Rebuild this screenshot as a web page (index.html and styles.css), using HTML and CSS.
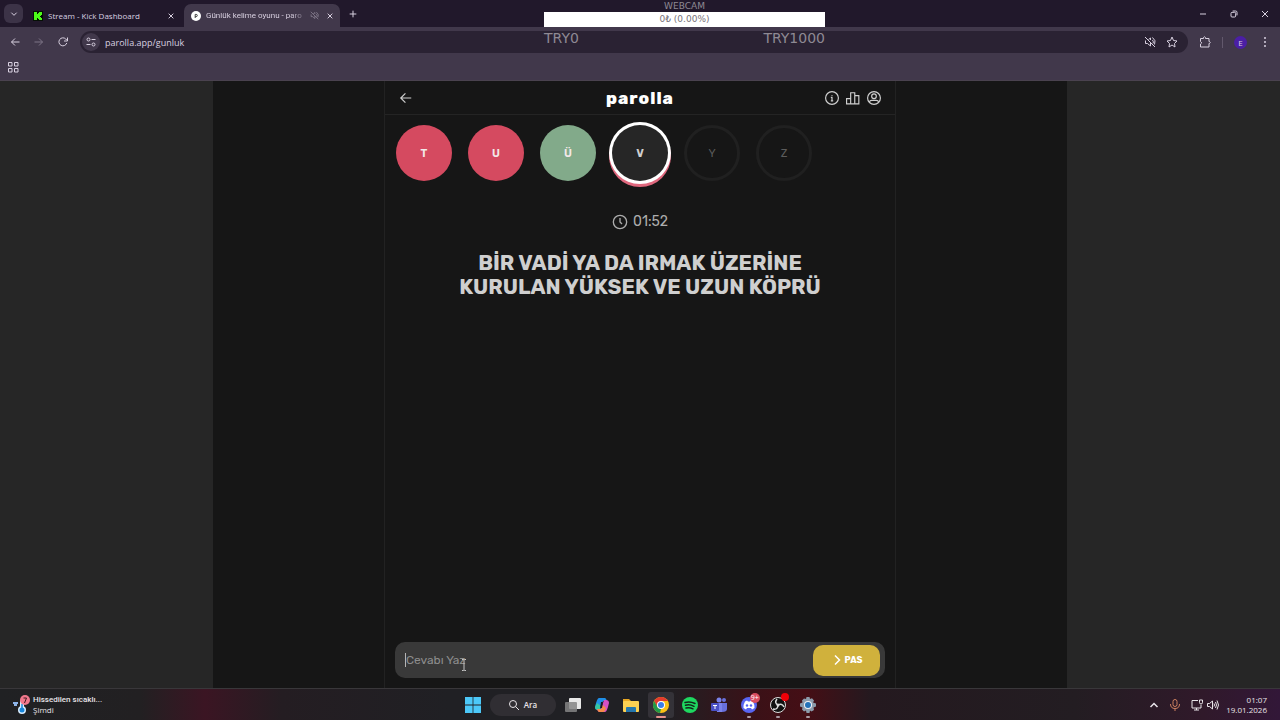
FILE: index.html
```html
<!DOCTYPE html>
<html lang="tr">
<head>
    <meta charset="UTF-8" />
    <title>Günlük kelime oyunu - parolla</title>
    <link rel="stylesheet" href="styles.css">
</head>
<body>
    <div class="tab-bar">
        <button class="tab-search" aria-label="Sekmelerde ara">
            <svg class="icon-small" viewBox="0 0 24 24"><path d="M4 8l8 8 8-8" /></svg>
        </button>
        <div class="tab">
            <svg class="favicon" viewBox="0 0 10 10"><rect width="10" height="10" fill="#061006" /><path fill="#4cfa18" d="M1 1h3v2h1V2h1V1h3v3H8v1H7v1h1v1h1v2H6V8H5V7H4v2H1z" /></svg>
            <span class="tab-title">Stream - Kick Dashboard</span>
            <button class="tab-close" aria-label="Kapat"><svg class="icon-small" viewBox="0 0 24 24"><path d="M5 5l14 14M19 5L5 19" /></svg></button>
        </div>
        <div class="tab tab-active">
            <svg class="favicon" viewBox="0 0 10 10"><circle cx="5" cy="5" r="5" fill="#fff" /><path d="M4.2 7V3.4h1a1.1 1.1 0 0 1 0 2.2h-1" fill="none" stroke="#444" stroke-width="1" /></svg>
            <span class="tab-title tab-title-fade">Günlük kelime oyunu - paro</span>
            <svg class="icon-mute" viewBox="0 0 24 24"><path d="M3 9v6h4l6 5v-7M9 7l4-3v4M2 2l20 20M17 8q3 4 1 7M17 3q8 6 4 14" /></svg>
            <button class="tab-close" aria-label="Kapat"><svg class="icon-small" viewBox="0 0 24 24"><path d="M5 5l14 14M19 5L5 19" /></svg></button>
        </div>
        <button class="new-tab" aria-label="Yeni sekme"><svg class="icon-small" viewBox="0 0 24 24"><path d="M12 2v20M2 12h20" /></svg></button>
        <div class="window-buttons">
            <button aria-label="Küçült"><svg class="icon-small" viewBox="0 0 24 24"><path d="M3 12h18" /></svg></button>
            <button aria-label="Geri yükle"><svg class="icon-small" viewBox="0 0 24 24"><rect x="3" y="7" width="14" height="14" rx="3" /><path d="M8 3h9q4 0 4 4v9" /></svg></button>
            <button aria-label="Pencereyi kapat"><svg class="icon-small" viewBox="0 0 24 24"><path d="M3 3l18 18M21 3L3 21" /></svg></button>
        </div>
    </div>

    <div class="toolbar">
        <button class="nav-button" aria-label="Geri"><svg class="icon" viewBox="0 0 24 24"><path d="M21 12H5M12 5l-7 7 7 7" /></svg></button>
        <button class="nav-button dim" aria-label="İleri"><svg class="icon" viewBox="0 0 24 24"><path d="M3 12h16M12 5l7 7-7 7" /></svg></button>
        <button class="nav-button" aria-label="Yenile"><svg class="icon" viewBox="0 0 24 24"><path d="M19.500 14a8 8 0 1 1-2-8l3 3M21 3v7h-7" /></svg></button>
        <div class="address-bar">
            <button class="site-info" aria-label="Site bilgileri"><svg class="icon" viewBox="0 0 24 24"><path d="M13 7h8M11 17H3" /><circle cx="7" cy="7" r="3" /><circle cx="17" cy="17" r="3" /></svg></button>
            <input class="url" type="text" value="parolla.app/gunluk" aria-label="Adres">
            <button class="address-button" aria-label="Ses kapalı"><svg class="icon" viewBox="0 0 24 24"><path d="M3 9v6h4l6 5v-7M9 7l4-3v4M2 2l20 20M17 8q3 4 1 7M17 3q8 6 4 14" /></svg></button>
            <button class="address-button" aria-label="Yer işareti"><svg class="icon" viewBox="0 0 24 24"><path d="M12 2l3 7 7 1-5 5 1 7-6-4-6 4 1-7-5-5 7-1z" /></svg></button>
        </div>
        <button class="tool-button" aria-label="Uzantılar"><svg class="icon" viewBox="0 0 24 24"><path d="M3 5h6V3q2-3 4 0v2h7v6h1q3 2 0 4h-1v7H3v-6q5-2 0-5z" /></svg></button>
        <span class="divider"></span>
        <button class="profile">E</button>
        <button class="menu-button" aria-label="Menü"><svg class="icon" viewBox="0 0 24 24"><path stroke-linecap="round" stroke-width="4" d="M12 4v0M12 12v0M12 20v0" /></svg></button>
    </div>

    <div class="bookmarks">
        <button class="nav-button" aria-label="Uygulamalar"><svg class="icon" viewBox="0 0 24 24"><path d="M3 3h7v7H3zM15 3h7v7h-7zM3 15h7v7H3zM15 15h7v7h-7z" /></svg></button>
    </div>

    <!-- bağış hedefi -->
    <div class="goal">
        <div class="goal-title">WEBCAM</div>
        <div class="goal-bar">0₺ (0.00%)</div>
        <div class="goal-range"><span>TRY0</span><span>TRY1000</span></div>
    </div>

    <div class="page">
        <main class="game">
            <header class="game-header">
                <a href="#" class="back" aria-label="Geri dön"><svg class="icon-game" viewBox="0 0 24 24"><path d="M21 12H4M11 4l-8 8 8 8" /></svg></a>
                <h1 class="logo">parolla</h1>
                <nav class="game-links">
                    <a href="#" aria-label="Bilgi"><svg class="icon-game" viewBox="0 0 24 24"><circle cx="12" cy="12" r="11" /><path d="M10 11h2v6M10 17h4M12 7v1" /></svg></a>
                    <a href="#" aria-label="İstatistik"><svg class="icon-game" viewBox="0 0 24 24"><path d="M1 13h7v9H1zM8 3h7v19H8zM15 8h7v14h-7z" /></svg></a>
                    <a href="#" aria-label="Profil"><svg class="icon-game" viewBox="0 0 24 24"><circle cx="12" cy="12" r="11" /><circle cx="12" cy="9" r="4" /><path d="M4 19q1-3 4-3h8q3 0 4 3" /></svg></a>
                </nav>
            </header>

            <div class="letters">
                <span class="letter wrong">T</span>
                <span class="letter wrong">U</span>
                <span class="letter correct">Ü</span>
                <span class="letter current">V</span>
                <span class="letter">Y</span>
                <span class="letter">Z</span>
            </div>

            <div class="timer">
                <svg class="icon-clock" viewBox="0 0 24 24"><circle cx="12" cy="12" r="10" /><path d="M12 6v6l3 3" /></svg>
                <span>01:52</span>
            </div>
            <h2 class="question">BİR VADİ YA DA IRMAK ÜZERİNE<br>KURULAN YÜKSEK VE UZUN KÖPRÜ</h2>

            <form class="answer">
                <span class="caret"></span>
                <input class="answer-input" type="text" placeholder="Cevabı Yaz" aria-label="Cevabı Yaz">
                <svg class="mouse" viewBox="0 0 6 12"><path d="M1 .5h1.500L3 1l.5-.5H5M3 1v10M1 11.500h1.500L3 11l.5.5H5" /></svg>
                <button class="pass" type="button"><svg class="icon" viewBox="0 0 24 24"><path d="M8 3l9 9-9 9" /></svg>PAS</button>
            </form>
        </main>
    </div>

    <footer class="taskbar">
        <div class="weather">
            <svg class="weather-icon" viewBox="0 0 20 20"><path d="M1 8h5M2 10h3" stroke="#8db4e8" stroke-width="2" /><path d="M10 6v9" stroke="#d9edff" stroke-width="4" stroke-linecap="round" /><circle cx="10" cy="15" r="4" fill="#d9edff" /><circle cx="10" cy="15" r="2.500" fill="#1686db" /><path d="M10 9v6" stroke="#1686db" stroke-width="1.500" /><circle cx="13" cy="5" r="5" fill="#f0788c" /><path d="M11.500 3h3l-2 5" fill="none" stroke="#401820" /></svg>
            <div class="weather-text"><span class="weather-title">Hissedilen sıcaklı...</span><span>Şimdi</span></div>
        </div>
        <div class="task-center">
            <button class="start" aria-label="Başlat"><svg viewBox="0 0 16 16"><path fill="#4cc8f8" d="M0 0h7.600v7.600H0zM8.400 0H16v7.600H8.400zM0 8.400h7.600V16H0zM8.400 8.400H16V16H8.400z" /></svg></button>
            <button class="search"><svg class="icon" viewBox="0 0 24 24"><circle cx="10" cy="10" r="7" /><path d="M15 15l7 7" /></svg>Ara</button>
            <div class="apps">
                <button class="app" aria-label="Görev görünümü"><svg viewBox="0 0 16 16"><rect x="4" y="1" width="12" height="11" rx="1" fill="#e8e8e8" /><rect x="0" y="5" width="12" height="10" rx="1" fill="#858585" opacity=".85" /></svg></button>
                <button class="app" aria-label="Copilot"><svg viewBox="0 0 16 16"><path fill="#1f8fe8" d="M5 1h6q1 0 2 3H9L6 13H4Q1 13 1 10 3 1 5 1z" /><path fill="#36c6a0" d="M3 6l-2 4q0 3 3 3h2l1-4z" /><path fill="#d650c4" d="M11 15H5q-1 0-2-3h4l3-9h2q3 0 3 3-2 9-4 9z" /><path fill="#f58a4a" d="M5 15q-1 0-2-3h4l2-4 3 3q-1 4-3 4z" /><path fill="#201b22" d="M7 5h2L8 11H6z" /></svg></button>
                <button class="app" aria-label="Dosya Gezgini"><svg viewBox="0 0 16 16"><path fill="#e8a723" d="M0 2h6l2 2h7v4H0z" /><rect y="4" width="16" height="11" rx="1" fill="#fbd052" /><path fill="#2577ad" d="M3 15v-4q0-1 1-1h8q1 0 1 1v4z" /></svg></button>
                <button class="app app-open" aria-label="Chrome"><svg viewBox="0 0 16 16"><circle cx="8" cy="8" r="8" fill="#fbc116" /><path fill="#e33b2e" d="M1.100 4A8 8 0 0 1 14.900 4H8L4.500 10z" /><path fill="#229a48" d="M1.100 4L4.600 10 8 12l-1 4A8 8 0 0 1 1.100 4z" /><circle cx="8" cy="8" r="4" fill="#fff" /><circle cx="8" cy="8" r="3" fill="#3b7de8" /></svg></button>
                <button class="app" aria-label="Spotify"><svg viewBox="0 0 16 16"><circle cx="8" cy="8" r="8" fill="#1ed760" /><path fill="none" stroke="#12251a" stroke-width="1.500" stroke-linecap="round" d="M3 5.500q5-1.500 10 1M3.500 8.300q4-1.300 8.500 1M4 11q3.500-1 7 .8" /></svg></button>
                <button class="app" aria-label="Teams"><svg viewBox="0 0 16 16"><circle cx="8" cy="3" r="2.500" fill="#7b83eb" /><circle cx="13" cy="3" r="2" fill="#6870dc" /><path fill="#7b83eb" d="M5 6h6v9H6z" /><path fill="#6870dc" d="M11 6h5v6q0 3-5 3z" /><rect y="6" width="8" height="8" rx="1" fill="#4a50c4" /><path stroke="#fff" d="M2 8.500h4M4 8.500V12" /></svg></button>
                <button class="app app-dot" aria-label="Discord"><svg viewBox="0 0 16 16"><circle cx="8" cy="8" r="8" fill="#5865f2" /><path fill="#fff" d="M4 4.500l2-1 1 1h2l1-1 2 1q2 4 1.500 6.500l-2.500 1.500-1-1.500H6l-1 1.500L2.500 11Q2 8 4 4.500z" /><circle cx="6" cy="8.500" r="1.200" fill="#5865f2" /><circle cx="10" cy="8.500" r="1.200" fill="#5865f2" /></svg><span class="badge">9+</span></button>
                <button class="app app-dot" aria-label="OBS"><svg viewBox="0 0 16 16"><circle cx="8" cy="8" r="7.500" fill="#111" stroke="#ddd" /><g fill="none" stroke="#ddd" stroke-width="1.500"><path d="M8 8Q4 6 7 2" /><path d="M8 8q4-2 6 2" /><path d="M8 8q0 5-5 4" /></g><circle cx="8" cy="8" r="1.500" fill="#ddd" /></svg><span class="badge badge-record"></span></button>
                <button class="app app-dot" aria-label="Ayarlar"><svg viewBox="0 0 16 16"><path fill="#8c9baa" d="M6.500 0h3l.5 2 2-.8 2 2.300L13 5.500l3 1v3l-2.500 1 .5 2.500-2.500 1.500-1.500-1-.5 2.500h-3L6 13.500 4 14.500 2 12.500 2.500 10.500 0 9.500v-3l2.500-1L2 3.500l2-2 2 .5z" /><circle cx="8" cy="8" r="4" fill="#f0f3f6" /><circle cx="8" cy="8" r="3" fill="#2372b8" /></svg></button>
            </div>
        </div>
        <div class="tray">
            <svg class="icon tray-arrow" viewBox="0 0 24 24"><path d="M5 16l7-7 7 7" /></svg>
            <svg class="icon tray-mic" viewBox="0 0 24 24"><rect x="8" y="1" width="8" height="14" rx="4" /><path d="M3 10q0 9 9 9t9-9M12 19v5" /></svg>
            <svg class="icon" viewBox="0 0 24 24"><path d="M14 3H2v15h18v-6M6 22h10M11 18v4M17 2v5q0 3 3 3t3-3V2z" /></svg>
            <svg class="icon" viewBox="0 0 24 24"><path d="M1 9v6h4l6 5V4L5 9zM14 9q2 3 0 6M17 6q4 6 0 12M20 3q6 9 0 18" /></svg>
            <div class="clock"><span>01:07</span><span>19.01.2026</span></div>
        </div>
    </footer>
</body>
</html>
```
FILE: styles.css
```css
* {
    box-sizing: border-box;
}

body {
    margin: 0;
    min-height: 100vh;
    display: flex;
    flex-direction: column;
    background-color: #161616;
    color: #d8d0e0;
    font-family: 'Open Sans', 'Noto Sans', sans-serif;
    font-size: 8px;
}

button {
    display: flex;
    align-items: center;
    justify-content: center;
    padding: 0;
    border: none;
    background: none;
    color: inherit;
    font: inherit;
    cursor: pointer;
}

input {
    min-width: 0;
    padding: 0;
    border: none;
    outline: none;
    background: none;
    color: inherit;
    font: inherit;
}

a {
    display: flex;
    color: inherit;
}

svg {
    display: block;
    flex-shrink: 0;
}

.icon, .icon-small, .icon-mute, .icon-game, .icon-clock {
    fill: none;
    stroke: currentColor;
    stroke-width: 2;
    width: 12px;
    height: 12px;
}

.icon-small {
    width: 8px;
    height: 8px;
    stroke-width: 3;
}

/* Sekmeler */
.tab-bar {
    display: flex;
    align-items: center;
    height: 27px;
    padding-left: 4px;
    background-color: #21182b;
}

.tab-search {
    width: 19px;
    height: 19px;
    border-radius: 6px;
    background-color: #3c3347;
}

.tab {
    display: flex;
    align-items: center;
    gap: 5px;
    width: 156px;
    height: 23px;
    margin: 4px 3px 0 2px;
    padding: 0 4px 0 8px;
}

.tab-active {
    margin: 4px 0 0;
    padding-left: 7px;
    border-radius: 7px 7px 0 0;
    background-color: #41384b;
}

.favicon {
    width: 10px;
    height: 10px;
}

.tab-title {
    flex: 1;
    white-space: nowrap;
}

.tab-title-fade {
    font-family: Roboto, sans-serif;
    -webkit-mask-image: linear-gradient(to right, #000 85%, rgba(0, 0, 0, 0.2));
    mask-image: linear-gradient(to right, #000 85%, rgba(0, 0, 0, 0.2));
}

.tab-close {
    width: 12px;
    height: 12px;
}

.icon-mute {
    width: 9px;
    height: 9px;
    opacity: 0.5;
}

.new-tab {
    width: 26px;
    height: 26px;
}

.window-buttons {
    display: flex;
    margin-left: auto;
}

.window-buttons button {
    width: 31px;
    height: 26px;
}

/* Adres çubuğu */
.toolbar {
    display: flex;
    align-items: center;
    height: 30px;
    padding: 0 3px;
    background-color: #41384b;
}

.nav-button {
    width: 24px;
    height: 20px;
}

.dim {
    opacity: 0.4;
}

.address-bar {
    flex: 1;
    display: flex;
    align-items: center;
    height: 22px;
    margin: 0 5px;
    padding: 0 5px 0 2px;
    border-radius: 11px;
    background-color: #2a2233;
}

.site-info {
    width: 18px;
    height: 18px;
    border-radius: 50%;
    background-color: #41384b;
}

.url {
    flex: 1;
    margin-left: 5px;
    font-size: 9px;
}

.address-button {
    width: 22px;
    height: 22px;
}

.tool-button {
    width: 24px;
    height: 24px;
}

.divider {
    width: 1px;
    height: 11px;
    margin: 0 11px 0 5px;
    background-color: #62586c;
}

.profile {
    width: 13px;
    height: 13px;
    border-radius: 50%;
    background-color: #4b1fa5;
}

.menu-button {
    width: 24px;
    height: 24px;
    margin-left: 6px;
}

.bookmarks {
    height: 24px;
    padding-left: 1px;
    border-bottom: 1px solid #4a424f;
    background-color: #41384b;
}

/* Yayın hedefi */
.goal {
    position: absolute;
    top: 0;
    left: 50%;
    width: 281px;
    margin-left: -96px;
    color: #8e8993;
    font-family: 'DejaVu Sans', sans-serif;
    font-size: 9px;
    text-align: center;
}

.goal-title {
    height: 12px;
    line-height: 12px;
}

.goal-bar {
    height: 15px;
    line-height: 15px;
    background-color: #fff;
    color: #77727a;
}

.goal-range {
    display: flex;
    justify-content: space-between;
    font-size: 14px;
    line-height: 22px;
}

/* Oyun */
.page {
    flex: 1;
    display: flex;
    justify-content: center;
    padding: 0 16.667%;
    background: linear-gradient(to right, #262626 16.667%, #161616 16.667%, #161616 83.333%, #262626 83.333%);
    font-family: Rubik, Inter, sans-serif;
}

.game {
    display: flex;
    flex-direction: column;
    width: 100%;
    max-width: 512px;
    border: solid #222;
    border-width: 0 1px;
    color: #cfcfcf;
}

.game-header {
    display: grid;
    grid-template-columns: 1fr auto 1fr;
    align-items: center;
    height: 34px;
    padding: 0 14px;
    border-bottom: 1px solid #242424;
}

.logo {
    margin: 0;
    color: #fff;
    font-size: 17px;
    font-weight: 800;
    line-height: 20px;
    letter-spacing: 1px;
}

.game-links {
    display: flex;
    justify-content: flex-end;
    gap: 7px;
}

.icon-game {
    width: 14px;
    height: 14px;
}

.icon-clock {
    width: 16px;
    height: 16px;
}

.letters {
    display: flex;
    gap: 16px;
    padding: 10px 11px;
}

.letter {
    display: flex;
    align-items: center;
    justify-content: center;
    width: 56px;
    height: 56px;
    border: 3px solid #202020;
    border-radius: 50%;
    color: #5c5c5c;
    font-size: 11px;
    font-weight: 400;
}

.wrong, .correct {
    border: none;
    color: #f2e8e8;
    font-weight: 600;
}

.wrong {
    background-color: #d54a60;
}

.correct {
    background-color: #82aa8a;
}

.current {
    border: none;
    background-color: #262626;
    color: #cfcfcf;
    font-weight: 700;
    box-shadow: 0 0 0 3px #fff, 0 3px 0 3px #e0687e;
}

.timer {
    display: flex;
    align-items: center;
    justify-content: center;
    gap: 5px;
    margin-top: 21px;
    color: #adadad;
    font-size: 14px;
    line-height: 20px;
}

.question {
    margin: 19px 0 0;
    font-size: 21px;
    font-weight: 700;
    line-height: 24px;
    text-align: center;
}

.answer {
    position: relative;
    display: flex;
    align-items: center;
    height: 36px;
    margin: auto 10px 10px;
    padding: 0 5px 0 10px;
    border-radius: 10px;
    background-color: #393939;
}

.caret {
    width: 1px;
    height: 14px;
    background-color: #b5b5b5;
}

.answer-input {
    flex: 1;
    font-size: 12px;
}

.answer-input::placeholder {
    color: #8d8d8d;
}

.mouse {
    position: absolute;
    top: 17px;
    left: 66px;
    width: 6px;
    height: 12px;
    fill: none;
    stroke: #c5c5c5;
}

.pass {
    gap: 2px;
    width: 67px;
    height: 31px;
    border-radius: 10px;
    background-color: #d0b13c;
    color: #fff;
    font-size: 9px;
    font-weight: 700;
}

.pass .icon {
    stroke-width: 3;
}

/* Görev çubuğu */
.taskbar {
    display: grid;
    grid-template-columns: 1fr auto 1fr;
    align-items: center;
    height: 32px;
    border-top: 1px solid #39373a;
    background: linear-gradient(to right, #202123 0%, #222022 11%, #3b1523 16%, #241d22 22%, #202024 35%, #202024 52%, #3a1117 59%, #450e15 63%, #24191f 68%, #231d22 84%, #30192a 94%, #321738 100%);
    color: #e8e4e8;
    line-height: 10px;
}

.weather {
    display: flex;
    gap: 1px;
    padding-left: 12px;
}

.weather-icon {
    width: 20px;
    height: 20px;
}

.weather-text, .clock {
    display: flex;
    flex-direction: column;
}

.weather-title {
    font-family: Roboto, sans-serif;
    font-weight: 500;
}

.task-center {
    display: flex;
    align-items: center;
    padding-left: 5px;
}

.start svg, .app svg {
    width: 16px;
    height: 16px;
}

.search {
    gap: 4px;
    width: 66px;
    height: 22px;
    margin: 0 4px 0 9px;
    border-radius: 11px;
    background-color: #302e33;
    font-weight: 600;
}

.apps {
    display: flex;
    justify-content: space-between;
    width: 261px;
}

.app {
    position: relative;
    width: 26px;
    height: 26px;
    border-radius: 3px;
}

.app-open {
    background-color: #343238;
}

.app-open::after, .app-dot::after {
    content: "";
    position: absolute;
    bottom: 0;
    width: 10px;
    height: 2px;
    border-radius: 1px;
    background-color: #e8938d;
}

.app-dot::after {
    width: 4px;
    background-color: #a99ba3;
}

.badge {
    position: absolute;
    top: 1px;
    right: 2px;
    width: 10px;
    height: 10px;
    border-radius: 50%;
    background-color: #d94c60;
    color: #fff;
    font-size: 7px;
    line-height: 10px;
}

.badge-record {
    width: 8px;
    height: 8px;
    background-color: #f00008;
}

.tray {
    display: flex;
    align-items: center;
    justify-content: flex-end;
    gap: 4px;
    padding-right: 13px;
}

.tray-arrow {
    stroke-width: 3;
    margin-right: 5px;
}

.tray-mic {
    margin-right: 6px;
    color: #cc805f;
}

.clock {
    margin-left: 3px;
    text-align: right;
}
```
